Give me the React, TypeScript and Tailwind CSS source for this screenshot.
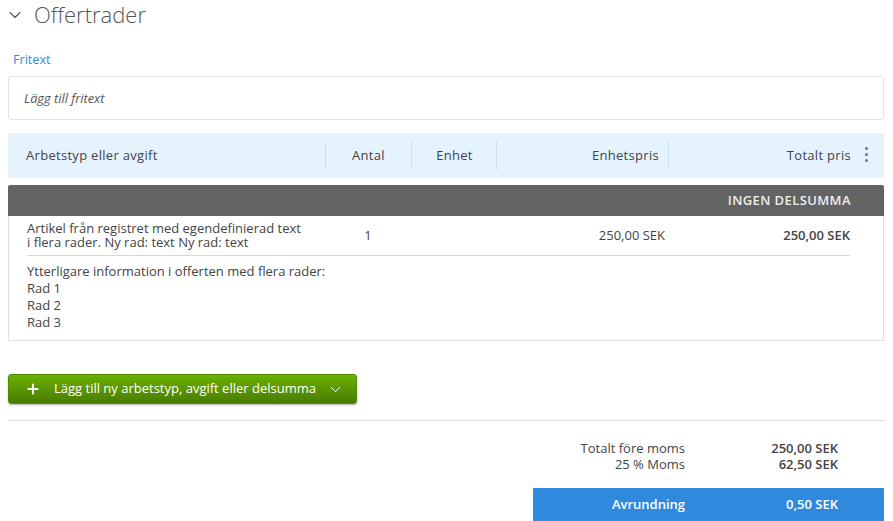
import { ChevronDown, Plus } from 'lucide-react';

export default function App() {
  return (
    <div className="w-[893px] h-[521px] overflow-hidden bg-white pl-2 pr-[9px] font-['Open_Sans',sans-serif] text-[13px] text-[#333]">
      {/* Section title */}
      <div className="flex h-[30px] items-center">
        <ChevronDown className="-ml-[3px] -mt-px w-[20px] h-[20px] text-[#555]" strokeWidth={1.3} />
        <h2 className="ml-[9px] -mt-[2px] text-[22px] font-light leading-[30px] text-[#555]">Offertrader</h2>
      </div>

      {/* Free text */}
      <div className="mt-[21px] ml-[5px] h-[17px] text-[12.6px] leading-[17px] text-[#2f8ade]">Fritext</div>
      <div className="mt-2 flex h-[44px] items-center rounded-[3px] border border-[#e2e2e2] pl-[15px] pt-px text-[12.8px] italic text-[#555]">
        Lägg till fritext
      </div>

      {/* Table header */}
      <div className="mt-[13px] flex h-[45px] items-center rounded-[2px] bg-[#e4f3fd] font-medium tracking-[0.3px] text-[#444]">
        <div className="w-[317px] pl-[18px]">Arbetstyp eller avgift</div>
        <div className="flex h-[29px] w-[86px] items-center justify-center border-l border-[#c8e0f0]">Antal</div>
        <div className="flex h-[29px] w-[85px] items-center justify-center border-l border-[#c8e0f0] pl-px">Enhet</div>
        <div className="flex h-[29px] w-[173px] items-center justify-end border-l border-r border-[#c8e0f0] pr-[9px]">Enhetspris</div>
        <div className="flex-1 text-right pr-[33px]">Totalt pris</div>
      </div>
      <div className="relative">
        <div className="absolute right-[16px] -top-[31px] flex flex-col gap-[3px]">
          <span className="w-[3px] h-[3px] rounded-full bg-[#777]" />
          <span className="w-[3px] h-[3px] rounded-full bg-[#777]" />
          <span className="w-[3px] h-[3px] rounded-full bg-[#777]" />
        </div>
      </div>

      {/* Row group */}
      <div className="mt-[7px] flex h-[31px] items-center justify-end rounded-t-[2px] bg-[#636363] pr-[33px] font-semibold tracking-[0.4px] text-[#eee]">
        INGEN DELSUMMA
      </div>
      <div className="h-[125px] rounded-b-[2px] border border-t-0 border-[#dcdcdc] pl-[18px] pr-[33px] text-[#444]">
        <div className="flex h-[40px] items-center border-b border-[#d8d8d8] pb-px">
          <div className="w-[298px] whitespace-nowrap leading-[14px]">
            Artikel från registret med egendefinierad text
            <br />i flera rader. Ny rad: text Ny rad: text
          </div>
          <div className="w-[86px] pt-[2px] text-center">1</div>
          <div className="w-[85px]" />
          <div className="w-[169px] pt-[2px] text-right">250,00 SEK</div>
          <div className="flex-1 pt-[2px] text-right font-semibold">250,00 SEK</div>
        </div>
        <div className="pt-[7px] leading-[17px]">
          Ytterligare information i offerten med flera rader:
          <br />Rad 1
          <br />Rad 2
          <br />Rad 3
        </div>
      </div>

      {/* Add button */}
      <button className="mt-[33px] flex h-[30px] w-[349px] items-center rounded-[3px] border border-[#4f8a00] bg-gradient-to-b from-[#6bb100] to-[#4a7c00] pl-[16px] font-medium text-white shadow-[0_1px_2px_rgba(0,0,0,0.3)]">
        <Plus className="w-[16px] h-[16px]" strokeWidth={2.8} />
        <span className="ml-[13px]">Lägg till ny arbetstyp, avgift eller delsumma</span>
        <ChevronDown className="ml-[11px] w-[17px] h-[17px]" strokeWidth={1.4} />
      </button>

      <div className="mt-4 border-t border-[#dcdcdc]" />

      {/* Totals */}
      <div className="mt-[19px] flex justify-end pr-[46px] leading-[16px] text-[#444]">
        <div className="text-right">
          <div>Totalt före moms</div>
          <div>25 % Moms</div>
        </div>
        <div className="ml-[46px] w-[107px] text-right font-semibold">
          <div>250,00 SEK</div>
          <div>62,50 SEK</div>
        </div>
      </div>
      <div className="mt-[16px] ml-auto flex h-[33px] w-[351px] items-center justify-end bg-[#2f8ade] pr-[46px] font-semibold text-white">
        <span>Avrundning</span>
        <span className="ml-[46px] w-[107px] text-right">0,50 SEK</span>
      </div>
    </div>
  );
}
